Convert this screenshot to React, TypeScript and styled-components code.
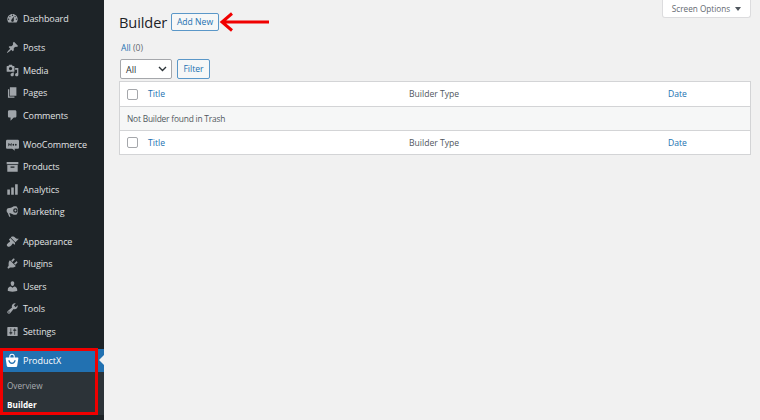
import React from "react";
import styled, { createGlobalStyle } from "styled-components";

const Global = createGlobalStyle`
  html, body { margin: 0; padding: 0; background: #f0f0f1; }
  * { box-sizing: border-box; }
`;

const Page = styled.div`
  position: relative;
  width: 760px;
  height: 420px;
  overflow: hidden;
  display: flex;
  background: #f1f1f1;
  font-family: "Open Sans", "Noto Sans", "Liberation Sans", sans-serif;
  font-size: 9px;
  color: #50575e;
`;

const Sidebar = styled.nav`
  width: 104px;
  flex: none;
  background: #1d2327;
  padding-top: 7px;
  display: flex;
  flex-direction: column;
`;

const Group = styled.div`
  display: flex;
  flex-direction: column;
  margin-bottom: 6.8px;
`;

const MenuItem = styled.div`
  height: 22.5px;
  display: flex;
  align-items: center;
  gap: 4px;
  padding-left: 6px;
  color: #e0e2e4;
  font-size: 9px;
  letter-spacing: -0.1px;
  svg { flex: none; width: 13px; height: 13px; fill: #a0a5aa; }
`;

const ActiveItem = styled(MenuItem)`
  position: relative;
  background: #2271b1;
  color: #fff;
  padding-left: 5px;
  letter-spacing: 0;
  svg { fill: #fff; width: 14px; height: 15px; }
  &::after {
    content: "";
    position: absolute;
    right: 0;
    top: 6px;
    border: 5px solid transparent;
    border-left: none;
    border-right-color: #f1f1f1;
    border-right-width: 5px;
  }
`;

const Submenu = styled.div`
  background: #2c3338;
  height: 43px;
  padding-top: 5px;
  display: flex;
  flex-direction: column;
`;

const SubItem = styled.div<{ $current?: boolean }>`
  height: 18.5px;
  display: flex;
  align-items: center;
  padding-left: 7px;
  font-size: 8.2px;
  color: ${(p) => (p.$current ? "#fff" : "#a9adb1")};
  font-weight: ${(p) => (p.$current ? 700 : 400)};
`;

const RedFrame = styled.div`
  position: absolute;
  left: 0;
  top: 348px;
  width: 98px;
  height: 67px;
  border: 3px solid #f00000;
  pointer-events: none;
`;

const Main = styled.main`
  flex: 1;
  min-width: 0;
  padding: 0 9px 0 15px;
`;

const ScreenOptions = styled.div`
  float: right;
  width: 89px;
  height: 18px;
  background: #fff;
  border: 1px solid #dcdcde;
  border-top: none;
  border-radius: 0 0 3px 3px;
  display: flex;
  align-items: center;
  justify-content: center;
  gap: 5px;
  font-size: 8.2px;
  color: #646970;
  &::after {
    content: "";
    border: 3px solid transparent;
    border-top: 4px solid #50575e;
    border-bottom: none;
  }
`;

const Heading = styled.div`
  display: flex;
  align-items: center;
  height: 43px;
`;

const Title = styled.h1`
  margin: 0 4px 0 0;
  font-size: 14.6px;
  letter-spacing: -0.1px;
  font-weight: 400;
  color: #1d2327;
  width: 48px;
`;

const OutlineButton = styled.div`
  display: flex;
  align-items: center;
  justify-content: center;
  background: #f6f7f7;
  border: 1px solid #5a97c8;
  border-radius: 2px;
  color: #2271b1;
  font-size: 8.6px;
`;

const AddNew = styled(OutlineButton)`
  width: 48px;
  height: 18px;
`;

const Arrow = styled.svg`
  width: 50px;
  height: 20px;
  flex: none;
`;

const Views = styled.div`
  margin: -5px 0 2px 2px;
  height: 19px;
  display: flex;
  align-items: center;
  font-size: 8.6px;
  color: #646970;
  span { color: #2271b1; }
`;

const Controls = styled.div`
  display: flex;
  gap: 5px;
  margin: 0 0 2px 1px;
`;

const Select = styled.div`
  width: 52px;
  height: 20px;
  background: #fff;
  border: 1px solid #a5a7ab;
  border-radius: 2px;
  display: flex;
  align-items: center;
  justify-content: space-between;
  padding: 0 4px 0 5px;
  font-size: 9px;
  color: #2c3338;
  svg { width: 9px; height: 6px; }
`;

const FilterButton = styled(OutlineButton)`
  width: 33px;
  height: 20px;
`;

const Table = styled.div`
  border: 1px solid #d3d4d6;
  background: #fff;
`;

const Row = styled.div<{ $top?: boolean }>`
  display: grid;
  grid-template-columns: 28px 261px 259px 1fr;
  align-items: center;
  height: 24px;
  ${(p) => (p.$top ? "border-top: 1px solid #d3d4d6;" : "")}
  font-size: 8.6px;
`;

const NoticeRow = styled.div`
  height: 24px;
  border-top: 1px solid #d3d4d6;
  background: #f6f7f7;
  display: flex;
  align-items: center;
  padding-left: 7px;
  font-size: 8.4px;
  letter-spacing: -0.2px;
  color: #50575e;
`;

const Check = styled.div`
  width: 11px;
  height: 11px;
  margin-left: 7px;
  border: 1px solid #a5a7ab;
  border-radius: 2px;
  background: #fff;
`;

const LinkCell = styled.div`
  color: #2271b1;
`;

const TextCell = styled.div`
  color: #50575e;
`;

const Head = ({ top }: { top?: boolean }) => (
  <Row $top={top}>
    <Check />
    <LinkCell>Title</LinkCell>
    <TextCell>Builder Type</TextCell>
    <LinkCell>Date</LinkCell>
  </Row>
);

const P: Record<string, string> = {
  Dashboard:
    "M3.76 16h12.48c1.1-1.37 1.76-3.11 1.76-5 0-4.42-3.58-8-8-8s-8 3.58-8 8c0 1.89.66 3.63 1.76 5zM10 4c.55 0 1 .45 1 1s-.45 1-1 1-1-.45-1-1 .45-1 1-1zM6 6c.55 0 1 .45 1 1s-.45 1-1 1-1-.45-1-1 .45-1 1-1zm8 0c.55 0 1 .45 1 1s-.45 1-1 1-1-.45-1-1 .45-1 1-1zm-5.37 5.55L12 7v6c0 1.1-.9 2-2 2s-2-.9-2-2c0-.57.24-1.08.63-1.45zM4 10c.55 0 1 .45 1 1s-.45 1-1 1-1-.45-1-1 .45-1 1-1zm12 0c.55 0 1 .45 1 1s-.45 1-1 1-1-.45-1-1 .45-1 1-1z",
  Posts:
    "M10.44 3.02l1.82-1.82 6.36 6.35-1.83 1.82c-1.05-.68-2.48-.57-3.41.36l-.75.75c-.92.93-1.04 2.35-.35 3.41l-1.83 1.82-2.41-2.41-2.8 2.79c-.42.42-3.38 2.71-3.8 2.29s1.86-3.39 2.28-3.81l2.79-2.79L4.1 9.36l1.83-1.82c1.05.69 2.48.57 3.4-.36l.75-.75c.93-.92 1.05-2.35.36-3.41z",
  Media:
    "M13 11V4c0-.55-.45-1-1-1h-1.67L9 1H5L3.67 3H2c-.55 0-1 .45-1 1v7c0 .55.45 1 1 1h10c.55 0 1-.45 1-1zM7 4.5c1.38 0 2.5 1.12 2.5 2.5S8.38 9.5 7 9.5 4.5 8.38 4.5 7 5.62 4.5 7 4.5zM14 6h5v10.5c0 1.38-1.12 2.5-2.5 2.5S14 17.88 14 16.5s1.12-2.5 2.5-2.5c.17 0 .34.02.5.05V9h-3V6zm-4 8.05V13h2v3.5c0 1.38-1.12 2.5-2.5 2.5S7 17.88 7 16.5 8.12 14 9.5 14c.17 0 .34.02.5.05z",
  Pages: "M6 15V2h10v13H6zm-1 1h8v2H3V5h2v11z",
  Comments:
    "M5 2h9c1.1 0 2 .9 2 2v7c0 1.1-.9 2-2 2h-2l-5 5v-5H5c-1.1 0-2-.9-2-2V4c0-1.1.9-2 2-2z",
  WooCommerce:
    "M2 2.500h16c1.100 0 2 .9 2 2v10c0 1.100-.9 2-2 2h-5l1 3-4.500-3H2c-1.100 0-2-.9-2-2v-10c0-1.100.9-2 2-2zM3 8l1 5 2-3 2 3 1-5H8l-.5 2.500L6 8l-1.500 2.500L4 8H3zm7 2.500a1.300 1.500 0 1 0 2.600 0 1.300 1.500 0 1 0-2.600 0zm3.800 0a1.300 1.500 0 1 0 2.600 0 1.300 1.500 0 1 0-2.600 0z",
  Products: "M1 3h18v3.500H1V3zm1 4.500h16V18H2V7.500zm5 2.500v2h6v-2H7z",
  Analytics: "M18 18V2h-4v16h4zm-6 0V7H8v11h4zm-6 0v-8H2v8h4z",
  Marketing:
    "M12 2l4 0c1.700 2 2.500 4.200 2.500 6.500S17.700 13 16 15l-4 0c-2-1.500-5-2.500-7-2.500L7 18H5L2.500 12C1.500 11.500 1 10 1 8.500S1.800 5.500 3 5c3 0 6.500-1.200 9-3zm2.500 3a3.500 3.500 0 1 0 0 7 3.500 3.500 0 1 0 0-7zm0 2a1.500 1.500 0 1 1 0 3 1.500 1.500 0 1 1 0-3z",
  Appearance:
    "M14.48 11.06L7.41 3.99l1.5-1.5c.5-.56 2.3-.47 3.51.32 1.21.8 1.43 1.28 2.91 2.1 1.18.64 2.45 1.26 4.45.85zm-.71.71L6.7 4.7 4.93 6.47c-.39.39-.39 1.02 0 1.41l1.06 1.06c.39.39.39 1.03 0 1.42-.6.6-1.43 1.11-2.21 1.69-.35.26-.7.53-1.01.84C1.43 13.23.5 15.5 2.21 17.2c1.72 1.72 3.99.79 5.33-.55.31-.31.58-.66.84-1.01.58-.78 1.09-1.61 1.69-2.21.39-.39 1.03-.39 1.42 0l1.06 1.06c.39.39 1.02.39 1.41 0z",
  Plugins:
    "M13.11 4.36L9.87 7.6 8 5.73l3.24-3.24c.35-.34 1.05-.2 1.56.32.52.51.66 1.21.31 1.55zm-8 1.77l.91-1.12 9.01 9.01-1.19.84c-.71.71-2.63 1.16-3.82 1.16H6.14L4.9 17.26c-.59.59-1.54.59-2.12 0-.59-.58-.59-1.53 0-2.12l1.24-1.24v-3.88c0-1.13.4-3.19 1.09-3.89zm7.26 3.97l3.24-3.24c.34-.35 1.04-.21 1.55.31.52.51.66 1.21.31 1.55l-3.24 3.25z",
  Users:
    "M10 9.25c-2.27 0-2.73-3.44-2.73-3.44C7 4.02 7.82 2 9.97 2c2.16 0 2.98 2.02 2.71 3.81 0 0-.41 3.44-2.68 3.44zm0 2.57L12.72 10c2.39 0 4.52 2.33 4.52 4.53v2.49s-3.65 1.13-7.24 1.13c-3.65 0-7.24-1.13-7.24-1.13v-2.49c0-2.25 1.94-4.48 4.47-4.48z",
  Tools:
    "M16.68 9.77c-1.34 1.34-3.3 1.67-4.95.99l-5.41 6.52c-.99.99-2.59.99-3.58 0s-.99-2.59 0-3.57l6.52-5.42c-.68-1.65-.35-3.61.99-4.95 1.28-1.28 3.12-1.62 4.72-1.06l-2.89 2.89 2.82 2.82 2.86-2.87c.53 1.58.18 3.39-1.08 4.65zM3.81 16.21c.4.39 1.04.39 1.43 0 .4-.4.4-1.04 0-1.43-.39-.4-1.03-.4-1.43 0-.39.39-.39 1.03 0 1.43z",
  Settings:
    "M18 16V4c0-.55-.45-1-1-1H3c-.55 0-1 .45-1 1v12c0 .55.45 1 1 1h14c.55 0 1-.45 1-1zM8 11h1c.55 0 1 .45 1 1s-.45 1-1 1H8v1.500c0 .28-.22.5-.5.5s-.5-.22-.5-.5V13H6c-.55 0-1-.45-1-1s.45-1 1-1h1V5.500c0-.28.22-.5.5-.5s.5.22.5.5V11zm5-2h-1c-.55 0-1-.45-1-1s.45-1 1-1h1V5.500c0-.28.22-.5.5-.5s.5.22.5.5V7h1c.55 0 1 .45 1 1s-.45 1-1 1h-1v5.500c0 .28-.22.5-.5.5s-.5-.22-.5-.5V9z",
};

const groups = [
  ["Dashboard"],
  ["Posts", "Media", "Pages", "Comments"],
  ["WooCommerce", "Products", "Analytics", "Marketing"],
  ["Appearance", "Plugins", "Users", "Tools", "Settings"],
];

export default function App() {
  return (
    <Page>
      <Global />
      <Sidebar>
        {groups.map((g) => (
          <Group key={g[0]}>
            {g.map((name) => (
              <MenuItem key={name}>
                <svg viewBox="0 0 20 20">
                  <path fillRule="evenodd" d={P[name]} />
                </svg>
                {name}
              </MenuItem>
            ))}
          </Group>
        ))}
        <ActiveItem>
          <svg viewBox="0 0 20 22">
            <path
              fillRule="evenodd"
              d="M6 6.500V5a4 4 0 0 1 8 0v1.500h4.200c.8 0 1.300.7 1.100 1.500l-1.700 11c-.2 1-1 1.500-2 1.500H4.400c-1 0-1.800-.5-2-1.500L.7 8C.5 7.200 1 6.500 1.800 6.500H6zm1.500 0h5V5a2.500 2.500 0 0 0-5 0v1.500zM4.500 10.500c.6 3.500 2.800 5.500 5.500 5.500s4.900-2 5.500-5.500h-2c-.5 2.300-1.800 3.600-3.500 3.600s-3-1.300-3.500-3.600h-2z"
            />
          </svg>
          ProductX
        </ActiveItem>
        <Submenu>
          <SubItem>Overview</SubItem>
          <SubItem $current>Builder</SubItem>
        </Submenu>
      </Sidebar>
      <Main>
        <ScreenOptions>Screen Options</ScreenOptions>
        <Heading>
          <Title>Builder</Title>
          <AddNew>Add New</AddNew>
          <Arrow viewBox="0 0 50 20">
            <path
              d="M50 10H3M13 1.500L3 10l10 8.500"
              fill="none"
              stroke="#f00000"
              strokeWidth="3"
            />
          </Arrow>
        </Heading>
        <Views>
          <span>All</span>&nbsp;(0)
        </Views>
        <Controls>
          <Select>
            All
            <svg viewBox="0 0 9 6">
              <path d="M1 1l3.500 3.500L8 1" fill="none" stroke="#2c3338" strokeWidth="1.400" />
            </svg>
          </Select>
          <FilterButton>Filter</FilterButton>
        </Controls>
        <Table>
          <Head />
          <NoticeRow>Not Builder found in Trash</NoticeRow>
          <Head top />
        </Table>
      </Main>
      <RedFrame />
    </Page>
  );
}
